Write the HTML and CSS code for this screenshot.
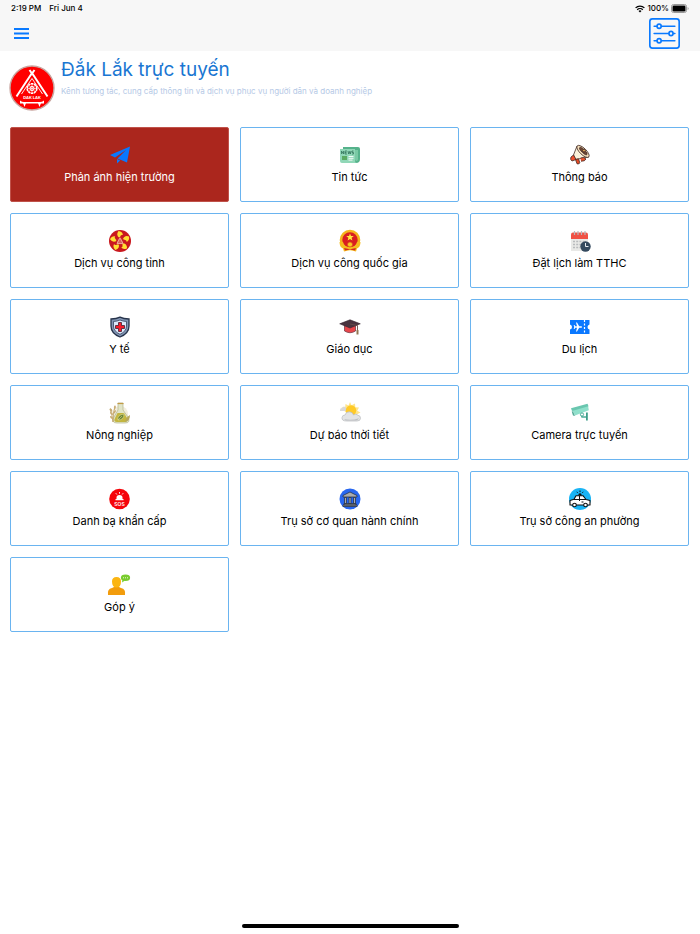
FILE: index.html
```html
<!DOCTYPE html>
<html lang="vi">
<head>
<meta charset="utf-8">
<meta name="viewport" content="width=device-width, initial-scale=1">
<title>Đắk Lắk trực tuyến</title>
<link rel="stylesheet" href="styles.css">
</head>
<body>
<div class="app">
  <header class="top">
    <div class="status">
      <div class="status-group">
        <span>2:19 PM</span>
        <span>Fri Jun 4</span>
      </div>
      <div class="status-right">
        <svg class="wifi" viewBox="0 0 10 8" aria-hidden="true"><g fill="none" stroke="#000" stroke-width="1.3"><path d="M.6 2.9a6.3 6.3 0 0 1 8.8 0"/><path d="M2.2 4.7a4 4 0 0 1 5.6 0"/></g><path d="M3.5 5.9a2.2 2.2 0 0 1 3 0L5 7.5z"/></svg>
        <span>100%</span>
        <svg class="battery" viewBox="0 0 18 9" aria-hidden="true"><rect x=".5" y=".5" width="15" height="8" rx="2" fill="#fff" stroke="#999"/><rect x="1.5" y="1.5" width="13" height="6" rx="1.2"/><path d="M16.6 3v3q1-.5 1-1.5t-1-1.5z" fill="#999"/></svg>
      </div>
    </div>
    <div class="toolbar">
      <button class="tool" type="button" aria-label="Menu"><svg class="menu-icon" viewBox="0 0 15 11"><path d="M0 1h15M0 5.5h15M0 10h15" stroke="#0a7aff" stroke-width="2"/></svg></button>
      <button class="tool" type="button" aria-label="Tùy chỉnh"><svg class="filter-icon" viewBox="0 0 30 30" fill="none" stroke="#0a7aff" stroke-width="1.600"><rect x=".8" y=".8" width="28.4" height="28.4" rx="2.5"/><path d="M5 8h2.500m4.600 0H25M5 15h14m4.600 0H25M5 22h2.500m4.600 0H25" stroke-linecap="round"/><circle cx="9.800" cy="8" r="2"/><circle cx="21.300" cy="15" r="2"/><circle cx="9.800" cy="22" r="2"/></svg></button>
    </div>
  </header>

  <section class="brand">
    <svg class="logo" viewBox="0 0 46 46" aria-hidden="true">
      <circle cx="23" cy="23" r="22" fill="#f00" stroke="#c9a5a0" stroke-width="1.400"/>
      <path d="M20.500 5 23 8.500 25.500 5M23 8 7.500 31.500M23 8l15.500 23.500" fill="none" stroke="#fff" stroke-width="2"/>
      <path d="M12.500 29 23 13.500 33.500 29" fill="none" stroke="#fff" stroke-width=".9"/>
      <circle cx="23" cy="23.500" r="4.800" fill="none" stroke="#fff" stroke-width="1.600" stroke-dasharray="2.400 .6"/>
      <circle cx="23" cy="23.500" r="2.100" fill="none" stroke="#fff"/>
      <path d="M23 18.500v10M18 23.500h10M19.500 20l7 7M26.500 20l-7 7" stroke="#fff" stroke-width=".6"/>
      <text x="23" y="34" text-anchor="middle" class="logo-text">DAK LAK</text>
      <path d="M11 35.500q2 1.500 4 1.500h16q2 0 4-1.500v3H11z" fill="#fff"/>
      <path d="M14 38h3l-1.500 4zM29 38h3l-1.500 4z" fill="#fff"/>
    </svg>
    <div>
      <h1 class="title">Đắk Lắk trực tuyến</h1>
      <p class="subtitle">Kênh tương tác, cung cấp thông tin và dịch vụ phục vụ người dân và doanh nghiệp</p>
    </div>
  </section>

  <main class="grid">
    <button class="card card-active" type="button">
      <svg class="icon" viewBox="0 0 22 22"><path d="M21 2.500 1 11l5 2.400L17 6 8.500 14.500 18 18.500z" fill="#0a78ff"/><path d="m8 15 3.200 1.400L8 19.500z" fill="#0a78ff"/></svg>
      <span>Phản ánh hiện trường</span>
    </button>
    <button class="card" type="button">
      <svg class="icon" viewBox="0 0 22 22"><path d="M4 3h15q2 0 2 2v10q0 4-4 4H4z" fill="#55b28b"/><path d="M16 6h3v9q0 2-1.500 2T16 15z" fill="#7acaa5"/><path d="M1 5h15v12q0 2 2 2H3q-2 0-2-2z" fill="#90d7b7"/><path d="M2.500 10V7l2 3V7M8 7H6v3h2M6 8.500h1.500M9 7l.7 3 .8-2.500.8 2.500L12 7m2.500 0H13v1.500h1.500V10H13" fill="none" stroke="#32745c" stroke-width=".8"/><path d="M3 12h5v4H3z" fill="#5aaa62"/><path d="M9.500 12.500h5m-5 1.800h5m-5 1.800h4" stroke="#fff" stroke-width=".9"/></svg>
      <span>Tin tức</span>
    </button>
    <button class="card" type="button">
      <svg class="icon" viewBox="0 0 22 22" stroke="#432c26" stroke-width=".8" stroke-linejoin="round"><path d="M8 2 4.500 11l2 4.500 13-2.500z" fill="#fbf2da"/><path d="m4.500 11-2.500 2q-1.200 2.500 1 4l4-1.500z" fill="#f1522e"/><path d="m6.500 15.500 1.500 4.300q2 .8 2.800-1l-1.300-4z" fill="#e64a25"/><path d="M11.500 14q3.500-1.500 5.500 1-1 2.500-5 2.200" fill="#ed542e"/><ellipse cx="14" cy="7.400" rx="3.200" ry="8" transform="rotate(-46 14 7.400)" fill="#f5dfbb"/><ellipse cx="14.300" cy="7.100" rx="1.500" ry="5" transform="rotate(-46 14.300 7.100)" fill="#704734"/><circle cx="15" cy="6.600" r="1.400" fill="#e5a95b"/></svg>
      <span>Thông báo</span>
    </button>
    <button class="card" type="button">
      <svg class="icon" viewBox="0 0 22 22"><circle cx="11" cy="11" r="11" fill="#c9181e"/><g fill="#ffdf32"><path id="petal" d="M10.500 8Q6.500 5 9.500 1q4 .5 4.500 4-2-1-3.500 3z"/><use href="#petal" transform="rotate(72 11 11)"/><use href="#petal" transform="rotate(144 11 11)"/><use href="#petal" transform="rotate(216 11 11)"/><use href="#petal" transform="rotate(288 11 11)"/></g><circle cx="11" cy="11" r="3.800" fill="#cb2027"/><path d="m11 7.800-3 5.700h6zM8.500 12h5M9.500 10h3" fill="none" stroke="#f5c0a8" stroke-width=".8"/></svg>
      <span>Dịch vụ công tỉnh</span>
    </button>
    <button class="card" type="button">
      <svg class="icon" viewBox="0 0 22 22"><circle cx="11" cy="10" r="9" fill="#d91e20" stroke="#f5b51c" stroke-width="2.600"/><path d="M.5 12H4q1 5 7 5t7-5h3.500q0 5-3.500 6.500l-1 3-6-1.500-6 1.500-1-3Q.5 17 .5 12z" fill="#f5bd1e"/><path d="m5 18 6 1.200 6-1.200-1 2.500-5-1-5 1z" fill="#d52821"/><circle cx="11" cy="14.500" r="2.500" fill="#f9c824" stroke="#d84620" stroke-width=".7"/><path d="m11 3.500 1 2.600h2.800l-2.200 1.700.8 2.700L11 9l-2.400 1.500.8-2.700-2.200-1.700H10z" fill="#ffec3c"/></svg>
      <span>Dịch vụ công quốc gia</span>
    </button>
    <button class="card" type="button">
      <svg class="icon" viewBox="0 0 22 22"><path d="M2 6h17v15H2z" fill="#e9e9e7"/><path d="M2 4.500q0-2 2-2h13q2 0 2 2V9H2z" fill="#f05245"/><path d="M5.500 1v4m3.500-4v4m3.500-4v4M16 1v4" stroke="#b6b9bd" stroke-width="1.200"/><path d="M4 11.500h13M4 14.500h8M4 17.500h7" stroke="#b9bbbd" stroke-width="1.700" stroke-dasharray="2 1.200"/><circle cx="16.500" cy="16.500" r="5.200" fill="#34495e"/><path d="M16.500 13v3.500h3" fill="none" stroke="#e8edf2" stroke-width="1"/></svg>
      <span>Đặt lịch làm TTHC</span>
    </button>
    <button class="card" type="button">
      <svg class="icon" viewBox="0 0 22 22"><path d="M11 1.200Q14.500 3 20 3v7q0 7.500-9 11Q2 17.500 2 10V3q5.500 0 9-1.800z" fill="#8497b5" stroke="#27344c" stroke-width="1.300"/><path d="M11 4q3 1.400 6.500 1.500V10q0 5.300-6.500 8.300Q4.500 15.300 4.500 10V5.500Q8 5.400 11 4z" fill="#dce9fb" stroke="#34435e" stroke-width=".8"/><path d="M9.500 6.500h3v3h3v3h-3v3h-3v-3h-3v-3h3z" fill="#f51d2b" stroke="#441e30" stroke-width=".8"/></svg>
      <span>Y tế</span>
    </button>
    <button class="card" type="button">
      <svg class="icon" viewBox="0 0 22 22"><path d="M5.500 9v6q5.500 3.500 11 0V9z" fill="#e8464b" stroke="#69303e" stroke-width=".7"/><path d="m.7 7.800 10.300-4 10.300 4L11 12z" fill="#49333f" stroke="#35242f" stroke-width=".6"/><path d="m11 8 7.500 1.500V15" fill="none" stroke="#664c49" stroke-width=".9"/><path d="M17.500 14h2v4.500h-2z" fill="#8e7752"/></svg>
      <span>Giáo dục</span>
    </button>
    <button class="card" type="button">
      <svg class="icon" viewBox="0 0 22 22"><path d="M1 4h19.500v4.500Q18.500 9 18.500 11t2 2.500V18H1v-4.500q2-.5 2-2.500T1 8.500z" fill="#0a78ff"/><path d="M15.500 4v14" stroke="#fff" stroke-width="1.200" stroke-dasharray="2 1.500"/><path d="m8 6.500 2.200 3.700h2.300q1.300.8 0 1.600h-2.300L8 15.500H7l1-3.700H6.300L5.500 13h-.8l.5-2-.5-2h.8l.8 1.200H8L7 6.500z" fill="#fff"/></svg>
      <span>Du lịch</span>
    </button>
    <button class="card" type="button">
      <svg class="icon" viewBox="0 0 22 22"><circle cx="11" cy="12" r="8" fill="#f2eddc"/><path d="M9 1h5v7l5 7q3 6-3 6H8q-6 0-3-6l4-7z" fill="#e1e5c8" stroke="#b5b58c" stroke-width=".7"/><path d="M8.500 11h6.500l3 5q1 4-2 4H8q-4 0-2-4z" fill="#c3b63f"/><path d="M9 18q-1-5 6-6 0 6-6 6zM9 18l4-4" fill="#6c8534" stroke="#eee8aa" stroke-width=".5"/><path d="M4 20Q3 12 1 7M4 20Q4 11 6 4" fill="none" stroke="#bea066" stroke-width=".8"/><path d="M1 6q3 1 2 4-3-1-2-4zM1 10q3 0 3 3-3 0-3-3zM1 14q3 0 3 3-3 0-3-3zM6 3q2 3-1 5-1-3 1-5zM7 8q0 3-3 4 0-3 3-4z" fill="#c8ac73"/><path d="M16 20q1-5 5-7 0 6-5 7z" fill="#b7a75a"/><path d="M8.500 1.500h6" stroke="#c29b45" stroke-width="1.200"/></svg>
      <span>Nông nghiệp</span>
    </button>
    <button class="card" type="button">
      <svg class="icon" viewBox="0 0 22 22"><path d="m11 0 1.500 3.300L16 1.500l.3 3.700 3.700.3-1.800 3.200 3.300 1.800-3.300 1.700L11 15 5 8.500 2.500 5.500l3.700-.3L6.500 2l3 1.500z" fill="#ffe58a"/><path d="M1 8Q1 6 3 6q2-3 4 0 3 0 3 3H1z" fill="#d8d8d8"/><circle cx="12" cy="8.500" r="5.200" fill="#ffca28"/><path d="M7.500 19q-5 0-4.500-3.500.3-2.500 3-2.500 1-3.500 4.500-3.200Q13.700 10 14.500 13q2.500-2 4.500.3 2.500.2 2.500 3Q21.500 19 18 19z" fill="#e3e4e5" stroke="#b8babd" stroke-width=".7"/><path d="M5 17q7 2 15-.8-1 2-3 2.300H7z" fill="#bdc0c3"/></svg>
      <span>Dự báo thời tiết</span>
    </button>
    <button class="card" type="button">
      <svg class="icon" viewBox="0 0 22 22"><path d="m3 7 16-3.800.8 5L6 13.500z" fill="#8fe0cb"/><path d="m2 6.300 16.500-4.500 1 2.500L3 9z" fill="#69c6af"/><path d="M4 9.300 6 14l-2-.5L2.700 9.600z" fill="#55aa98"/><path d="m12 12 1 3h5" fill="none" stroke="#4fad9a" stroke-width="1.500"/><circle cx="13" cy="12.500" r="1.600" fill="#fff" stroke="#4fad9a"/><path d="M17 10.500h1.800v8H17z" fill="#3e9e89"/></svg>
      <span>Camera trực tuyến</span>
    </button>
    <button class="card" type="button">
      <svg class="icon" viewBox="0 0 22 22"><circle cx="10.500" cy="11" r="10.300" fill="#f5050b"/><path d="M7.500 11V9.500q0-2.500 3-2.500t3 2.500V11h1v1.300h-8V11z" fill="#fff"/><path d="M10.500 4v1.700M6.800 5.200l1 1.300M14.200 5.200l-1 1.300" stroke="#fff" stroke-width=".9"/><text x="10.500" y="17.500" text-anchor="middle" class="sos">SOS</text></svg>
      <span>Danh bạ khẩn cấp</span>
    </button>
    <button class="card" type="button">
      <svg class="icon" viewBox="0 0 22 22"><circle cx="11" cy="11" r="10.500" fill="#2867f0"/><g fill="#a9abaf" stroke="#202838" stroke-width=".7"><path d="M4 7.500 11 4l7 3.500V9H4zM5 15.500h12V17H5zM4 17h14v1.500H4z"/><path d="M5.500 9.500h2v6h-2zM10 9.500h2v6h-2zM14.500 9.500h2v6h-2z"/></g></svg>
      <span>Trụ sở cơ quan hành chính</span>
    </button>
    <button class="card" type="button">
      <svg class="icon" viewBox="0 0 22 22"><circle cx="11" cy="11" r="11" fill="#19b4f5"/><path d="m1 12.500 4-1.200 2-3.600h7l3 3.800 4 1V17H1z" fill="#fff" stroke="#111" stroke-width="1.100" stroke-linejoin="round"/><path d="M5 11.500h12M10.500 8v5M12.500 14h2" stroke="#111" stroke-width="1"/><g fill="#fff" stroke="#111" stroke-width="1.100"><circle cx="5.500" cy="17" r="1.800"/><circle cx="16.500" cy="17" r="1.800"/></g><path d="M9.500 7.500V6q1.500-1.500 3 0v1.500z" fill="#111"/><path d="M11 2.500v1.500M7.800 3.800l.8 1M14.200 3.800l-.8 1" stroke="#111" stroke-width="1"/></svg>
      <span>Trụ sở công an phường</span>
    </button>
    <button class="card" type="button">
      <svg class="icon" viewBox="0 0 22 22"><path d="M-1 21q-1-6 4-7l3-1.500h3l3 1.500q5 1 4 7z" fill="#f29c0c"/><path d="M3 7.500Q3 3 7.500 3T12 7.500q0 6-4.500 6T3 7.500z" fill="#fbb512"/><ellipse cx="16.500" cy="3.800" rx="4.600" ry="3.200" fill="#79cc2e"/><path d="m13.500 5.500-.5 3 3-2z" fill="#79cc2e"/><path d="M14 3.800h1m1 0h1m1 0h1" stroke="#e9f9d4" stroke-width="1"/></svg>
      <span>Góp ý</span>
    </button>
  </main>
  <div class="home-bar"></div>
</div>
</body>
</html>
```

FILE: styles.css
```css
* {
  box-sizing: border-box;
}

body {
  margin: 0;
  background: #fff;
  color: #000;
  font-family: Inter, "Noto Sans", sans-serif;
}

.app {
  display: flex;
  flex-direction: column;
  min-height: 100vh;
}

.top {
  height: 51px;
  background: #f7f7f7;
}

.status {
  display: flex;
  justify-content: space-between;
  height: 17px;
  padding: 0 11px;
  font-size: 8px;
  font-weight: 500;
  line-height: 17px;
}

.status-group {
  display: flex;
  gap: 8px;
}

.status-right {
  display: flex;
  align-items: center;
  gap: 2px;
}

.wifi {
  width: 10px;
  height: 8px;
}

.battery {
  width: 18px;
  height: 9px;
}

.toolbar {
  display: flex;
  align-items: center;
  justify-content: space-between;
  height: 32px;
  padding: 0 20px 0 14px;
}

.tool {
  padding: 0;
  border: 0;
  background: none;
}

.tool svg {
  display: block;
}

.menu-icon {
  width: 15px;
  height: 11px;
}

.filter-icon {
  width: 31px;
  height: 31px;
}

.brand {
  display: flex;
  gap: 6px;
  padding: 5px 9px 0;
}

.logo {
  flex: none;
  width: 46px;
  height: 46px;
  margin-top: 9px;
}

.logo-text {
  fill: #fff;
  font-size: 4px;
  font-weight: 700;
}

.title {
  margin: 0;
  color: #1976d2;
  font-size: 19px;
  font-weight: 400;
  line-height: 28px;
}

.subtitle {
  margin: 0;
  color: #b5c9e6;
  font-size: 8px;
  line-height: 14px;
}

.grid {
  display: grid;
  grid-template-columns: repeat(3, 1fr);
  gap: 11px;
  padding: 16px 11px 16px 10px;
}

.card {
  display: flex;
  flex-direction: column;
  align-items: center;
  gap: 3px;
  height: 75px;
  padding: 16px 4px 0;
  border: 1px solid #6ab4f0;
  border-radius: 2px;
  background: #fff;
  color: #000;
  font-family: inherit;
  font-size: 11px;
  line-height: 16px;
}

.card-active {
  border-color: #c0524a;
  background: #ab261d;
  color: #fff;
}

.icon {
  flex: none;
  width: 22px;
  height: 22px;
  overflow: visible;
}

.sos {
  fill: #fff;
  font-size: 5px;
  font-weight: 600;
}

.home-bar {
  width: 31%;
  height: 4px;
  margin: auto auto 6px;
  border-radius: 2px;
  background: #000;
}
```
